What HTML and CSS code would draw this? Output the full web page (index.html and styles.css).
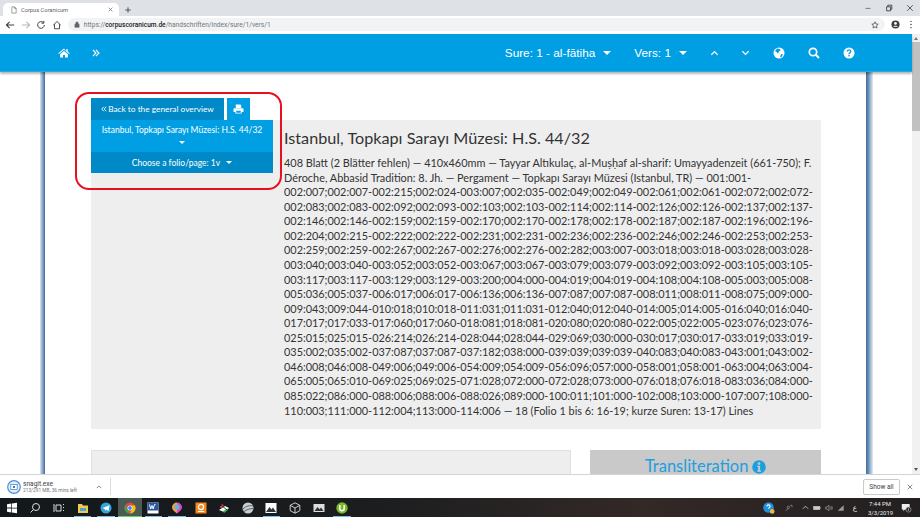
FILE: index.html
```html
<!DOCTYPE html>
<html lang="de">
<head>
<meta charset="utf-8">
<title>Corpus Coranicum</title>
<link rel="stylesheet" href="styles.css">
</head>
<body>
<div class="tabstrip">
  <div class="tab">
    <svg class="tab-doc" viewBox="0 0 10 12"><path d="M1.500 .8h4.500l2.600 2.600v7.800h-7.100z M6 .8v2.600h2.600" fill="none" stroke="#5f6368" stroke-width="1"/></svg>
    <span class="tab-title">Corpus Coranicum</span>
    <svg class="tab-x" viewBox="0 0 8 8"><path d="M1 1l6 6M7 1l-6 6" stroke="#5f6368" stroke-width="1.100"/></svg>
  </div>
  <svg class="tab-plus" viewBox="0 0 10 10"><path d="M5 .5v9M.5 5h9" stroke="#3c4043" stroke-width="1.400"/></svg>
  <div class="winctl">
    <svg viewBox="0 0 10 10"><path d="M2 5.500h6" stroke="#5f6368" stroke-width="1"/></svg>
    <svg viewBox="0 0 10 10"><path d="M2 3.500h5v5h-5z M3.500 3.500v-2h5v5h-1.500" fill="none" stroke="#3c4043" stroke-width="1.100"/></svg>
    <svg viewBox="0 0 10 10"><path d="M1.500 1.500l7 7M8.500 1.500l-7 7" stroke="#3c4043" stroke-width="1"/></svg>
  </div>
</div>
<div class="toolbar">
  <svg class="tb-ic" viewBox="0 0 12 12"><path d="M11 6H2M5.500 2.200L1.700 6l3.800 3.800" fill="none" stroke="#3c4043" stroke-width="1.300"/></svg>
  <svg class="tb-ic" viewBox="0 0 12 12"><path d="M1 6h9M6.500 2.200L10.300 6l-3.800 3.800" fill="none" stroke="#b8babd" stroke-width="1.300"/></svg>
  <svg class="tb-ic" viewBox="0 0 12 12"><path d="M10 6a4 4 0 1 1-1.200-2.900M9.400 1v2.800H6.600" fill="none" stroke="#3c4043" stroke-width="1.200"/></svg>
  <svg class="tb-ic" viewBox="0 0 12 12"><path d="M1.500 6.200L6 1.800l4.500 4.400M3 5v5.500h6V5" fill="none" stroke="#3c4043" stroke-width="1.100"/></svg>
  <div class="omnibox">
    <svg class="lock" viewBox="0 0 8 10"><path d="M1 4.500h6v4.500H1zM2.300 4.500V3a1.700 1.700 0 0 1 3.400 0v1.500" fill="#5f6368" stroke="#5f6368" stroke-width=".8"/></svg>
    <span class="url">https://<b>corpuscoranicum.de</b>/handschriften/index/sure/1/vers/1</span>
    <svg class="star" viewBox="0 0 10 10"><path d="M5 1l1.200 2.700 2.800.3-2.100 1.900.6 2.900L5 7.300 2.500 8.800l.6-2.900L1 4l2.800-.3z" fill="none" stroke="#3c4043" stroke-width=".9"/></svg>
  </div>
  <svg class="tb-acct" viewBox="0 0 10 10"><circle cx="5" cy="5" r="4.500" fill="#3c4043"/><circle cx="5" cy="3.800" r="1.500" fill="#fff"/><path d="M2.300 7.500c1-1.400 4.400-1.400 5.400 0z" fill="#fff"/></svg>
  <svg class="tb-more" viewBox="0 0 4 10"><circle cx="2" cy="1.500" r=".8" fill="#3c4043"/><circle cx="2" cy="5" r=".8" fill="#3c4043"/><circle cx="2" cy="8.500" r=".8" fill="#3c4043"/></svg>
</div>

<div class="viewport">
  <div class="site">
    <nav class="navbar">
      <svg class="nav-home" viewBox="0 0 16 13"><path fill="#fff" d="M8 .6L.4 6.900l.8 1L8 2.300l6.800 5.600.8-1-2.600-2.100V1.500h-2v2.700zM2.800 8v4.600h3.900V9.300h2.600v3.300h3.900V8L8 3.700z"/></svg>
      <svg class="nav-dbl" viewBox="0 0 10 10"><path d="M1.200 1.200L4.800 5 1.200 8.800M5 1.200L8.600 5 5 8.800" fill="none" stroke="#fff" stroke-width="1.500"/></svg>
      <span class="nav-item nav-sure">Sure: 1 - al-fātiḥa<i class="caret"></i></span>
      <span class="nav-item nav-vers">Vers: 1<i class="caret"></i></span>
      <svg class="nav-chev nav-up" viewBox="0 0 10 6"><path d="M1.500 5L5 1.500 8.500 5" fill="none" stroke="#fff" stroke-width="1.400"/></svg>
      <svg class="nav-chev nav-down" viewBox="0 0 10 6"><path d="M1.500 1L5 4.500 8.500 1" fill="none" stroke="#fff" stroke-width="1.400"/></svg>
      <svg class="nav-ic nav-globe" viewBox="0 0 12 12"><circle cx="6" cy="6" r="5.500" fill="#fff"/><path fill="#009fe3" d="M4 1.500l3 .5 .5 1.500-1.500 1-1 2-1.500-1.500L2 4zM8 7l2 .5-1.500 2.500-1.500 .5z"/></svg>
      <svg class="nav-ic" viewBox="0 0 12 12"><circle cx="5" cy="5" r="3.700" fill="none" stroke="#fff" stroke-width="1.700"/><path d="M7.800 7.800l3.200 3.200" stroke="#fff" stroke-width="2"/></svg>
      <svg class="nav-ic nav-help" viewBox="0 0 12 12"><circle cx="6" cy="6" r="5.500" fill="#fff"/><path d="M4.300 4.600c0-2.200 3.500-2.200 3.500 0 0 1.300-1.800 1.300-1.800 2.600" fill="none" stroke="#009fe3" stroke-width="1.300"/><rect x="5.300" y="8" width="1.400" height="1.400" fill="#009fe3"/></svg>
    </nav>
    <div class="page-row">
      <div class="edge edge-left"></div>
      <main class="content">
        <section class="manuscript">
          <div class="side">
            <div class="side-tabs">
              <a class="tab-back"><svg class="dbl" viewBox="0 0 8 8"><path d="M3.800 1L1 4l2.800 3M7 1L4.200 4 7 7" fill="none" stroke="#fff" stroke-width="1.200"/></svg>Back to the general overview</a>
              <a class="tab-print">
                <svg viewBox="0 0 12 11"><path fill="#fff" d="M3 .5h5l1 1v3H3zM1.500 4.800h9c.6 0 1 .4 1 1v3h-2v1.700h-7V8.800h-2v-3c0-.6.400-1 1-1zM3.500 7.500v2h5v-2z"/></svg>
              </a>
            </div>
            <div class="side-select">Istanbul, Topkapı Sarayı Müzesi: H.S. 44/32<br><i class="caret caret-sm"></i></div>
            <div class="side-folio">Choose a folio/page: 1v<i class="caret caret-sm caret-gap"></i></div>
          </div>
          <div class="details">
            <h1>Istanbul, Topkapı Sarayı Müzesi: H.S. 44/32</h1>
            <p>408 Blatt (2 Blätter fehlen) — 410x460mm — Tayyar Altıkulaç, al-Muṣḥaf al-sharif: Umayyadenzeit (661-750); F. Déroche, Abbasid Tradition: 8. Jh. — Pergament — Topkapı Sarayı Müzesi (Istanbul, TR) — 001:001-002:007;002:007-002:215;002:024-003:007;002:035-002:049;002:049-002:061;002:061-002:072;002:072-002:083;002:083-002:092;002:093-002:103;002:103-002:114;002:114-002:126;002:126-002:137;002:137-002:146;002:146-002:159;002:159-002:170;002:170-002:178;002:178-002:187;002:187-002:196;002:196-002:204;002:215-002:222;002:222-002:231;002:231-002:236;002:236-002:246;002:246-002:253;002:253-002:259;002:259-002:267;002:267-002:276;002:276-002:282;003:007-003:018;003:018-003:028;003:028-003:040;003:040-003:052;003:052-003:067;003:067-003:079;003:079-003:092;003:092-003:105;003:105-003:117;003:117-003:129;003:129-003:200;004:000-004:019;004:019-004:108;004:108-005:003;005:008-005:036;005:037-006:017;006:017-006:136;006:136-007:087;007:087-008:011;008:011-008:075;009:000-009:043;009:044-010:018;010:018-011:031;011:031-012:040;012:040-014:005;014:005-016:040;016:040-017:017;017:033-017:060;017:060-018:081;018:081-020:080;020:080-022:005;022:005-023:076;023:076-025:015;025:015-026:214;026:214-028:044;028:044-029:069;030:000-030:017;030:017-033:019;033:019-035:002;035:002-037:087;037:087-037:182;038:000-039:039;039:039-040:083;040:083-043:001;043:002-046:008;046:008-049:006;049:006-054:009;054:009-056:096;057:000-058:001;058:001-063:004;063:004-065:005;065:010-069:025;069:025-071:028;072:000-072:028;073:000-076:018;076:018-083:036;084:000-085:022;086:000-088:006;088:006-088:026;089:000-100:011;101:000-102:008;103:000-107:007;108:000-110:003;111:000-112:004;113:000-114:006 — 18 (Folio 1 bis 6: 16-19; kurze Suren: 13-17) Lines</p>
          </div>
        </section>
        <section class="lower">
          <div class="image-panel"></div>
          <div class="trans-panel"><span>Transliteration</span>
            <svg class="info" viewBox="0 0 14 14"><circle cx="7" cy="7" r="6.800" fill="#1c9fe0"/><circle cx="7" cy="3.600" r="1.300" fill="#c9c9c9"/><path d="M5.200 5.700h2.900v4.800h1v1.300H5.200v-1.300h1V7H5.200z" fill="#c9c9c9"/></svg>
          </div>
        </section>
      </main>
      <div class="edge edge-right"></div>
    </div>
    <div class="annotation"></div>
  </div>
  <div class="scrollbar">
    <i class="sb-up"></i>
    <div class="sb-thumb"></div>
    <i class="sb-down"></i>
  </div>
</div>

<div class="downloads">
  <svg class="dl-ic" viewBox="0 0 14 14"><circle cx="7" cy="7" r="6.300" fill="#e4eefa" stroke="#4a90d9" stroke-width="1.200"/><rect x="3.800" y="4.600" width="6.400" height="4.800" fill="#fff" stroke="#3f78b5" stroke-width=".7"/><rect x="6" y="6" width="2" height="2" fill="#3f78b5"/></svg>
  <div class="dl-text"><div class="dl-name">snagit.exe</div><div class="dl-sub">213/291 MB, 36 mins left</div></div>
  <svg class="dl-caret" viewBox="0 0 8 5"><path d="M1 4l3-3 3 3" fill="none" stroke="#5f6368" stroke-width="1"/></svg>
  <div class="dl-sep"></div>
  <div class="dl-show">Show all</div>
  <svg class="dl-x" viewBox="0 0 8 8"><path d="M1 1l6 6M7 1l-6 6" stroke="#5f6368" stroke-width="1"/></svg>
</div>

<footer class="taskbar">
  <div class="tb-left">
    <span class="slot"><svg viewBox="0 0 12 12"><path fill="#fff" d="M1 2.200l4.300-.6v4H1zM6 1.500l5-.7v4.900H6zM1 6.400h4.300v4l-4.300-.6zM6 6.400h5v4.900l-5-.7z"/></svg></span>
    <span class="slot"><svg viewBox="0 0 12 12"><circle cx="7" cy="5" r="3.500" fill="none" stroke="#ddd" stroke-width="1"/><path d="M4.500 7.500L1.500 10.500" stroke="#ddd" stroke-width="1"/></svg></span>
    <span class="slot"><svg viewBox="0 0 12 12"><path fill="none" stroke="#ddd" stroke-width="1" d="M3 3h5v6H3zM1 2v8M10 2.500h1M10 5.500h1M10 8.500h1"/></svg></span>
    <span class="slot on"><svg viewBox="0 0 12 12"><path fill="#f2c94c" d="M1 2h4l1 1.500h5V11H1z"/><path fill="#4aa3df" d="M3 6h6v3H3z"/></svg></span>
    <span class="slot on"><svg viewBox="0 0 12 12"><circle cx="6" cy="6" r="5.500" fill="#2fa5dc"/><path fill="#fff" d="M2.500 6l7-2.800-1 6.100-2.300-1.700-1.100 1.100-.3-1.800z"/></svg></span>
    <span class="slot active"><svg viewBox="0 0 12 12"><circle cx="6" cy="6" r="5.500" fill="#e5493a"/><path fill="#f4c20d" d="M6 11.500A5.500 5.500 0 0 0 11 3.600H6L8 7z"/><path fill="#34a853" d="M1.400 3L4 7.500 6 11.500A5.500 5.500 0 0 1 1.400 3z"/><circle cx="6" cy="6" r="2.500" fill="#fff"/><circle cx="6" cy="6" r="1.900" fill="#4285f4"/></svg></span>
    <span class="slot on"><svg viewBox="0 0 12 12"><rect x=".5" y=".5" width="11" height="11" fill="#fff"/><rect x=".5" y=".5" width="11" height="8" fill="#2b579a"/><path d="M2.500 2.500l1.200 4.500L5 3.500 6.200 7l1.300-4.500h1" fill="none" stroke="#fff" stroke-width="1"/></svg></span>
    <span class="slot on"><svg viewBox="0 0 12 12"><path fill="#d64dc2" d="M6 .5a5 5 0 0 1 5 5c0 2.500-3 4.500-5 6z"/><path fill="#f2a13b" d="M6 .5a5 5 0 0 0-5 5c0 2.500 3 4.500 5 6z"/><circle cx="6" cy="5" r="2.500" fill="#5bb6e8"/></svg></span>
    <span class="slot"><svg viewBox="0 0 12 12"><rect x=".5" y=".5" width="11" height="11" fill="#f48a1f"/><circle cx="6" cy="5" r="2.600" fill="none" stroke="#fff" stroke-width="1.200"/><rect x="3" y="9" width="6" height="1" fill="#fff"/></svg></span>
    <span class="slot"><svg viewBox="0 0 12 12"><path fill="#fff" d="M1 8l6-4 4 2-5 4z"/><path fill="#e54" d="M2 5l2-3 2 2-3 2z"/><path fill="#3b4" d="M5 9l4-2 1 1-4 3z"/><path stroke="#111" stroke-width=".8" d="M3 3l6 5"/></svg></span>
    <span class="slot"><svg viewBox="0 0 12 12"><circle cx="6" cy="6" r="5.500" fill="#c9cdd2"/><path d="M1 7c3-3 7-4 10-3M2 9.500c3-2 6-3 9.500-3" stroke="#59626b" stroke-width="1" fill="none"/></svg></span>
    <span class="slot on"><svg viewBox="0 0 12 12"><rect x=".5" y="1" width="11" height="10" fill="#fff"/><path d="M1 10l3.500-5 2 2.500L8 5.500l3 4.500z" fill="#333"/></svg></span>
    <span class="slot"><svg viewBox="0 0 12 12"><path fill="none" stroke="#ddd" stroke-width=".9" d="M6 .8l4.800 2.500v5.400L6 11.200 1.200 8.700V3.300zM1.200 3.300L6 6l4.800-2.700M6 6v5.200"/></svg></span>
    <span class="slot"><svg viewBox="0 0 12 12"><rect x=".5" y="2" width="11" height="8" fill="#ddd"/><path d="M1.500 9l3-4 2 2.200L8 5.500 10.500 9z" fill="#333"/></svg></span>
    <span class="slot on"><svg viewBox="0 0 12 12"><circle cx="6" cy="6" r="5.700" fill="#76b82a"/><path d="M3.800 3v3.500a2.200 2.200 0 0 0 4.400 0V3" fill="none" stroke="#fff" stroke-width="1.500"/></svg></span>
  </div>
  <div class="tray">
    <svg class="tray-help" viewBox="0 0 12 12"><circle cx="5.500" cy="5.500" r="5.300" fill="#1f8fd6"/><path d="M3.900 4.400c0-2 3.200-2 3.200 0 0 1.200-1.600 1.200-1.600 2.400" fill="none" stroke="#fff" stroke-width="1.100"/><circle cx="9.200" cy="9.400" r="2.300" fill="#f4b63f"/></svg>
    <svg class="tray-ic" viewBox="0 0 12 12"><circle cx="5" cy="5" r="1.800" fill="none" stroke="#bbb" stroke-width=".8"/><path d="M1.500 10.500c.5-2 2-3 3.500-3M8 2h2.500v3" fill="none" stroke="#bbb" stroke-width=".8"/></svg>
    <svg class="tray-ic caretup" viewBox="0 0 8 5"><path d="M1 4l3-3 3 3" fill="none" stroke="#ddd" stroke-width=".9"/></svg>
    <svg class="tray-ic" viewBox="0 0 12 12"><rect x=".8" y="3.500" width="9.500" height="5" fill="#ccc" stroke="#ddd" stroke-width=".6"/><rect x="10.300" y="5" width="1" height="2" fill="#ddd"/></svg>
    <svg class="tray-ic" viewBox="0 0 12 12"><path d="M1 4.500h2L6 2v8L3 7.500H1z" fill="none" stroke="#ccc" stroke-width=".8"/><path d="M8 4c1 1 1 3 0 4M9.700 2.800c1.500 1.800 1.500 4.600 0 6.400" fill="none" stroke="#ccc" stroke-width=".8"/></svg>
    <svg class="tray-ic" viewBox="0 0 12 12"><path d="M1 10L10 2v8z" fill="#999"/></svg>
    <span class="tray-lang">ع</span>
    <div class="clock"><div>7:44 PM</div><div>3/3/2019</div></div>
    <svg class="tray-note" viewBox="0 0 14 12"><path d="M1 1h10v7H5l-2 2V8H1z" fill="#eee"/><circle cx="9.500" cy="8" r="3.200" fill="#222" stroke="#ccc" stroke-width=".7"/><path d="M9.500 6.500v3" stroke="#fff" stroke-width=".8"/></svg>
  </div>
</footer>
</body>
</html>
```
FILE: styles.css
```css
* { box-sizing: border-box; }
html, body { margin: 0; padding: 0; height: 517px; overflow: hidden; background: #fff; }
body { display: flex; flex-direction: column; width: 920px; font-family: "Lato", "Liberation Sans", sans-serif; }
svg { display: block; flex: none; }

/* browser chrome */
.tabstrip { height: 16px; flex: none; background: #dee1e6; display: flex; align-items: flex-end; padding-left: 3px; }
.tab { width: 116px; height: 13px; background: #fff; border-radius: 5px 5px 0 0; display: flex; align-items: center; padding: 0 6px 0 8px; }
.tab-doc { width: 6px; height: 8px; }
.tab-title { font: 5.700px "Roboto", "Liberation Sans", sans-serif; color: #5f6368; margin-left: 4px; flex: 1; white-space: nowrap; }
.tab-x { width: 5px; height: 5px; }
.tab-plus { width: 6px; height: 6px; margin: 0 0 3px 6px; }
.winctl { margin-left: auto; display: flex; gap: 13px; padding-right: 6px; align-self: center; }
.winctl svg { width: 8px; height: 8px; }

.toolbar { height: 18px; flex: none; background: #fff; display: flex; align-items: center; padding: 0 5px 1px 5px; }
.tb-ic { width: 10px; height: 10px; margin-right: 5.700px; }
.omnibox { height: 13px; width: 817px; flex: none; border-radius: 7px; background: #f1f3f4; display: flex; align-items: center; padding: 0 6px 0 6px; }
.lock { width: 6px; height: 7px; margin-right: 4px; }
.url { font: 6.600px "Roboto", "Liberation Sans", sans-serif; color: #70757a; white-space: nowrap; flex: 1; }
.url b { font-weight: 500; color: #202124; }
.star { width: 8px; height: 8px; }
.tb-acct { width: 9px; height: 9px; margin-left: 6px; }
.tb-more { width: 4px; height: 9px; margin-left: 9px; }

/* viewport */
.viewport { height: 440px; flex: none; display: flex; overflow: hidden; }
.site { flex: 1; min-width: 0; display: flex; flex-direction: column; position: relative; }
.navbar { height: 38px; flex: none; background: #009fe3; border-bottom: 1px solid #29abe2; box-shadow: 0 2px 2px rgba(0,0,0,.28); display: flex; align-items: center; color: #fff; position: relative; z-index: 2; padding-left: 58px; }
.nav-home { width: 12px; height: 10px; }
.nav-dbl { width: 8px; height: 8px; margin-left: 22px; }
.nav-item { font: 11.800px "Liberation Sans", Arial, sans-serif; white-space: nowrap; display: flex; align-items: center; }
.nav-sure { margin-left: auto; }
.nav-vers { margin-left: 23px; }
.caret { display: inline-block; width: 0; height: 0; border-left: 4.500px solid transparent; border-right: 4.500px solid transparent; border-top: 4.500px solid #fff; margin-left: 8px; }
.nav-chev { width: 9px; height: 6px; }
.nav-up { margin-left: 23px; }
.nav-down { margin-left: 22px; }
.nav-ic { width: 12px; height: 12px; margin-left: 23px; }
.nav-help { margin-right: 57px; }

.page-row { flex: 1; min-height: 0; display: flex; padding-left: 40px; }
.edge { flex: none; }
.edge-left { width: 5px; background: linear-gradient(90deg, #dfe6f0, #7f9cc1 60%, #3f6a9f); }
.edge-right { width: 7px; background: linear-gradient(90deg, #3f6a9f, #6b8fb8 35%, #e4ebf4); }
.content { width: 821px; flex: none; background: #fff; padding: 48px 45px 0 46px; overflow: hidden; }

.manuscript { background: #eee; height: 309px; display: grid; grid-template-columns: 193px 1fr; }
.side { margin-top: -22px; color: #fff; width: 182px; }
.side-tabs { display: flex; height: 22px; gap: 3px; }
.tab-back { width: 133px; background: #0089c7; display: flex; align-items: center; justify-content: center; white-space: nowrap; font-size: 8.300px; }
.dbl { width: 6px; height: 6px; margin-right: 1px; }
.tab-print { width: 23px; background: #009fe3; display: flex; align-items: center; justify-content: center; }
.tab-print svg { width: 11px; height: 10px; }
.side-select { background: #009fe3; height: 32px; text-align: center; font-size: 8.500px; line-height: 12px; padding-top: 4px; }
.side-folio { background: #0089c7; height: 21px; display: flex; align-items: center; justify-content: center; font-size: 8.500px; }
.caret-sm { border-left-width: 3px; border-right-width: 3px; border-top-width: 3px; margin: 0; vertical-align: middle; }
.caret-gap { margin-left: 6px; }

.details { padding: 8px 8px 0 0; color: #333; }
.details h1 { margin: 0 0 8px; font-size: 16.200px; font-weight: 400; line-height: 20px; color: #333; }
.details p { margin: 0; font-size: 10.900px; line-height: 14.560px; color: #333; }

.lower { display: flex; gap: 19px; margin-top: 21px; }
.image-panel { width: 481px; height: 24px; background: #eee; border: 1px solid #e0e0e0; border-bottom: 0; }
.trans-panel { width: 231px; height: 24px; background: #c9c9c9; color: #1c9fe0; font-size: 16.500px; display: flex; justify-content: center; align-items: flex-start; padding-top: 9px; line-height: 15px; gap: 4px; }
.info { width: 14px; height: 14px; margin-top: 1px; }

.annotation { position: absolute; left: 75px; top: 58px; width: 207px; height: 98px; border: 2px solid #e8101f; border-radius: 14px; z-index: 3; pointer-events: none; }

.scrollbar { width: 8px; flex: none; background: #f1f1f1; display: flex; flex-direction: column; align-items: center; }
.sb-up, .sb-down { width: 0; height: 0; border-left: 2.500px solid transparent; border-right: 2.500px solid transparent; }
.sb-up { border-bottom: 3px solid #777; margin-top: 3px; }
.sb-down { border-top: 3px solid #555; margin-bottom: 3px; margin-top: auto; }
.sb-thumb { width: 8px; height: 89px; background: #c1c1c1; margin-top: 2px; }

/* downloads */
.downloads { height: 24px; flex: none; background: #fff; border-top: 1px solid #d3d5d8; display: flex; align-items: center; padding: 0 5px 0 7px; }
.dl-ic { width: 14px; height: 14px; }
.dl-text { margin-left: 2px; width: 66px; font-family: "Roboto", "Liberation Sans", sans-serif; }
.dl-name { font-size: 6.600px; line-height: 8px; color: #3c4043; }
.dl-sub { font-size: 4.800px; line-height: 6px; color: #70757a; white-space: nowrap; }
.dl-caret { width: 6px; height: 4px; margin-left: 7px; }
.dl-sep { width: 1px; height: 17px; background: #dadce0; margin-left: 8px; }
.dl-show { margin-left: auto; width: 37px; height: 16px; border: 1px solid #c8cacd; border-radius: 2px; font: 6.500px/14px "Roboto", "Liberation Sans", sans-serif; color: #3c4043; text-align: center; }
.dl-x { width: 6px; height: 6px; margin-left: 7px; margin-right: 2px; }

/* taskbar */
.taskbar { height: 19px; flex: 1; background: linear-gradient(90deg, #12181b 0%, #1b1d1f 40%, #332927 70%, #231f20 100%); display: flex; align-items: stretch; justify-content: space-between; }
.tb-left { display: flex; }
.slot { width: 23.600px; display: flex; align-items: center; justify-content: center; position: relative; }
.slot svg { width: 12px; height: 12px; }
.slot.on::after { content: ""; position: absolute; left: 3px; right: 3px; bottom: 0; height: 1px; background: #76b9ed; }
.slot.active { background: #4b5a54; }
.slot.active::after { content: ""; position: absolute; left: 0; right: 0; bottom: 0; height: 1px; background: #5fd35f; }
.tray { display: flex; align-items: center; padding-right: 8px; color: #e8e8e8; }
.tray-help { width: 12px; height: 12px; }
.tray-ic { width: 8px; height: 8px; margin-left: 4px; }
.tray-ic:nth-child(2) { margin-left: 10px; margin-right: 4px; }
.caretup { width: 7px; height: 5px; margin-left: 5px; }
.tray-lang { font: 7px "Noto Sans", "DejaVu Sans", sans-serif; margin-left: 8px; }
.clock { font: 6px/9px "Roboto", "Liberation Sans", sans-serif; text-align: center; margin-left: 11px; width: 24px; white-space: nowrap; }
.tray-note { width: 11px; height: 10px; margin-left: 9px; }
```
